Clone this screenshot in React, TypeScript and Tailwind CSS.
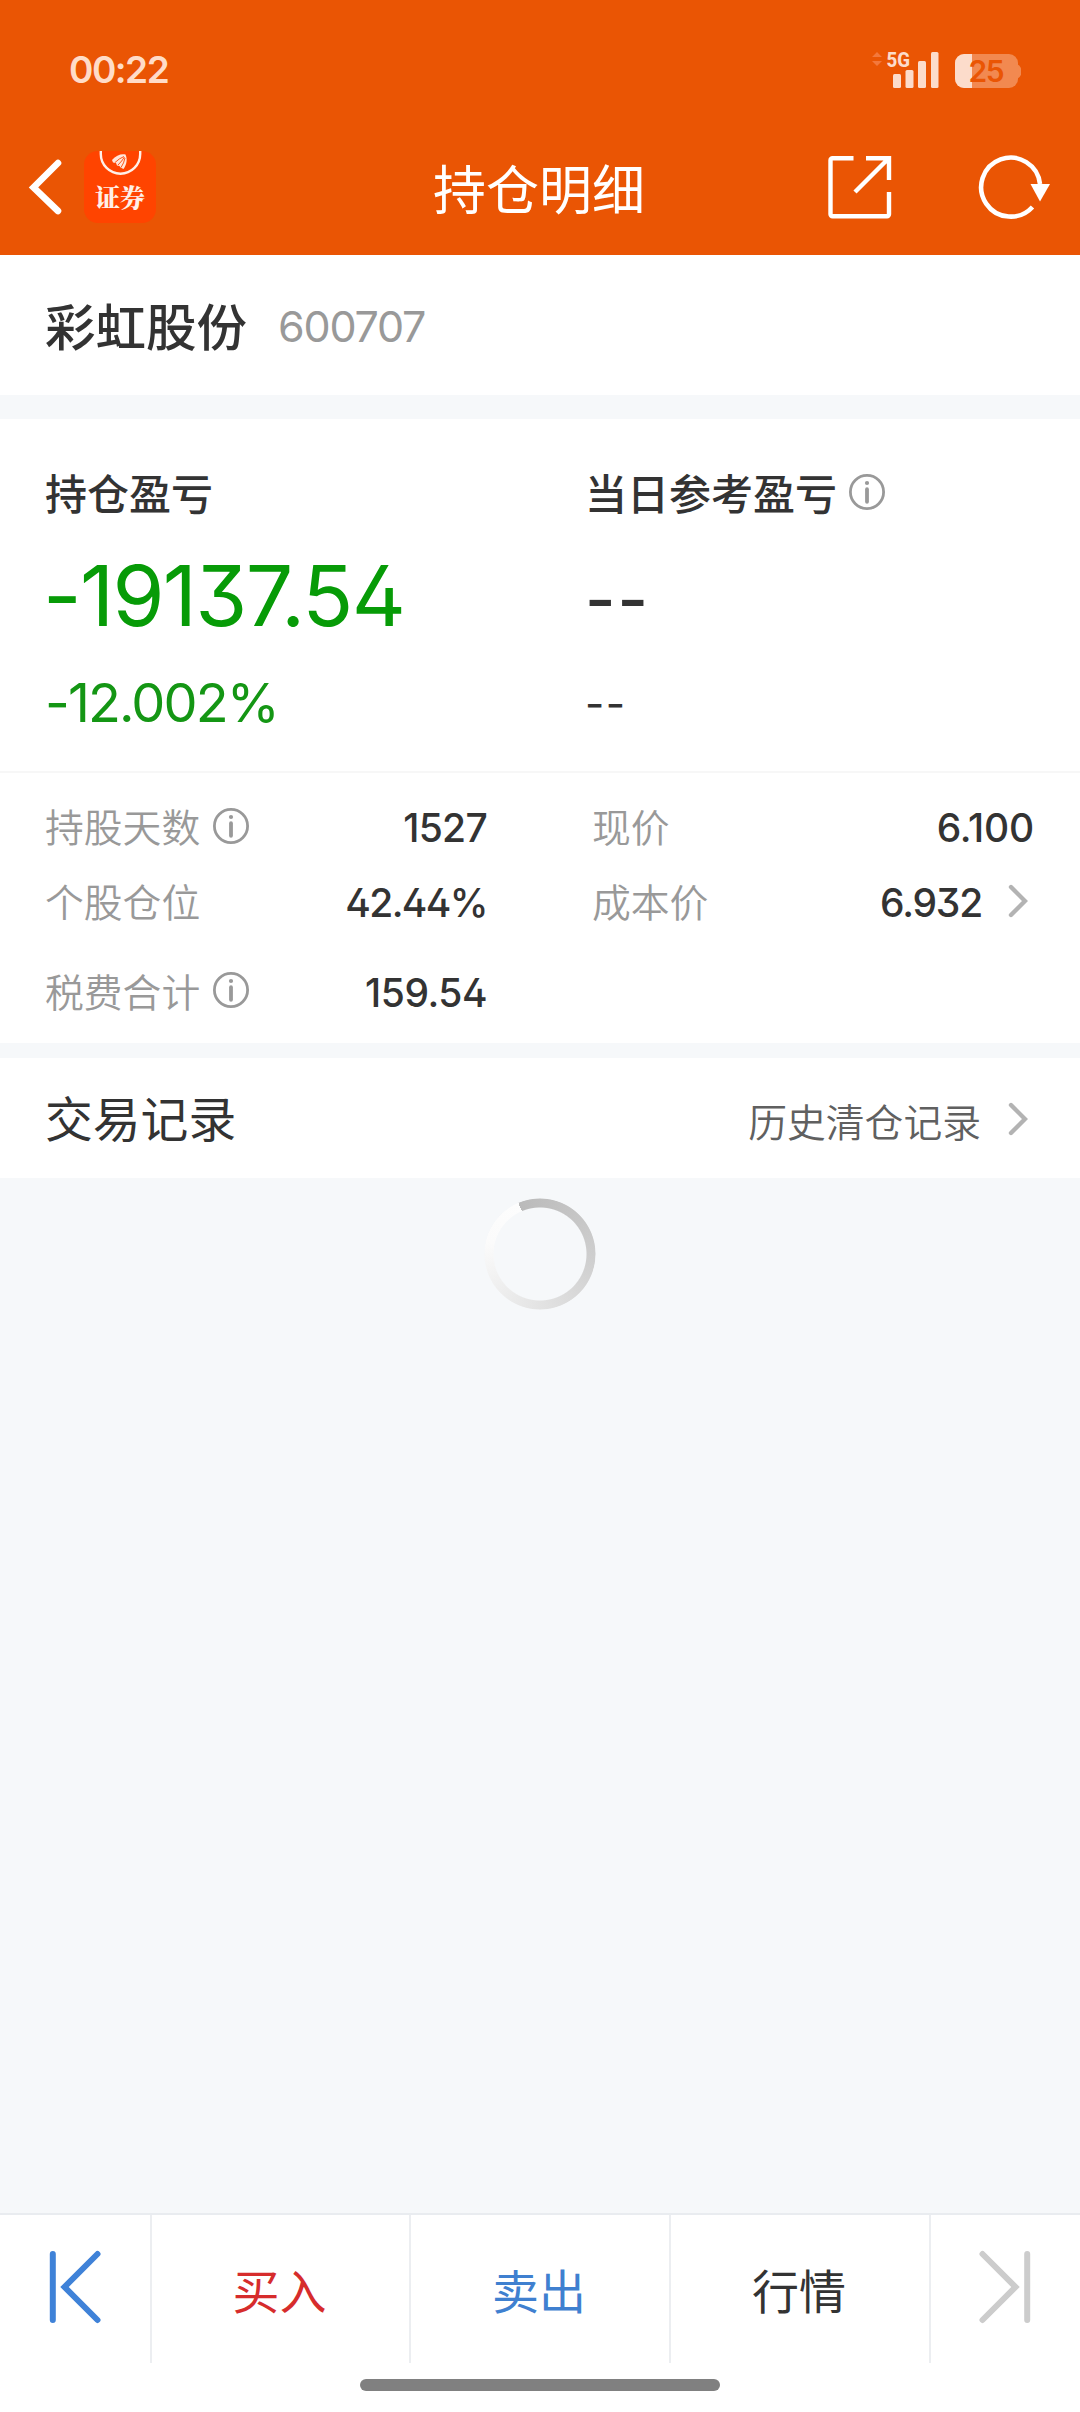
import type { ReactNode } from 'react'

const numFont = "font-['Inter','Noto_Sans_CJK_SC',sans-serif] [font-feature-settings:'cv02','cv09']"

function InfoIcon() {
  return (
    <svg width="36" height="36" viewBox="0 0 36 36" fill="none" stroke="#999" className="block shrink-0">
      <circle cx="18" cy="18" r="16.6" strokeWidth="2.8" />
      <circle cx="18" cy="9" r="2.1" fill="#999" stroke="none" />
      <path d="M18 15.2v12.6" strokeWidth="3.8" strokeLinecap="round" />
    </svg>
  )
}

function ChevronRight() {
  return (
    <svg width="20" height="34" viewBox="0 0 20 34" fill="none" className="block shrink-0">
      <path d="M3 3l14 14L3 31" stroke="#b3b3b3" strokeWidth="4.4" strokeLinecap="round" />
    </svg>
  )
}

function StatusBar() {
  return (
    <div className="flex h-[116px] items-start justify-between pl-[69px] pr-[59px]">
      <span className={`${numFont} mt-[47px] text-[37px] leading-[46px] font-semibold tracking-[-1.5px] text-[#ffdcc8]`}>00:22</span>
      <div className="mt-[44px] flex">
        <svg width="72" height="46" viewBox="0 -6 72 46" className="block overflow-visible">
          <path d="M2 7l5-5 5 5zM2 11h10l-5 5z" fill="#f3783c" />
          <text x="16.5" y="17" fontFamily="Roboto, sans-serif" fontWeight="800" fontSize="21" textLength="23.5" lengthAdjust="spacingAndGlyphs" fill="#fcdccb">5G</text>
          <g fill="#fcdccb">
            <rect x="23" y="24" width="8" height="14" rx="1.5" />
            <rect x="35.5" y="20" width="8" height="18" rx="1.5" />
            <rect x="48" y="11" width="8" height="27" rx="1.5" />
            <rect x="61" y="2" width="7.5" height="36" rx="1.5" />
          </g>
        </svg>
        <svg width="68" height="46" viewBox="0 -6 68 46" className="ml-[11px] block">
          <clipPath id="level"><rect x="0" y="0" width="19" height="40" /></clipPath>
          <path d="M64 14q4.500 2 4.500 7.500T64 29z" fill="#f28950" />
          <rect x="2" y="4" width="63" height="34" rx="9" fill="#f28950" />
          <rect x="2" y="4" width="63" height="34" rx="9" fill="#fcdccb" clipPath="url(#level)" />
          <text x="15.5" y="32" fontFamily="Inter, sans-serif" fontWeight="600" fontSize="30" textLength="36" fill="#ea5504">25</text>
        </svg>
      </div>
    </div>
  )
}

function AppLogo() {
  return (
    <svg width="72" height="72" viewBox="0 0 72 72" className="block">
      <rect width="72" height="72" rx="14" fill="#ff4400" />
      <path d="M16.800 0v3a19.700 19.700 0 0 0 39.400 0V0" fill="none" stroke="#fff0e8" strokeWidth="2.4" />
      <path d="M28 9c4-4.500 9-6.500 13.500-5.500 2 4.500 1.500 9.500-2 14.500l-3-1.500-1-1.500-2.500-.5-1-2.500-3-.5z" fill="#ffe6da" />
      <path d="M31 11.500q4-4 9-6M34 14q4-4 6.500-8M37 16.500q3-4.500 4-9.500" stroke="#ff4400" strokeWidth=".9" fill="none" />
      <text x="11" y="56" fontFamily="'Noto Serif CJK SC', 'Noto Sans CJK SC', sans-serif" fontWeight="800" fontSize="25" textLength="50" fill="#fff0e8">证券</text>
    </svg>
  )
}

function TitleBar() {
  return (
    <div className="grid h-[139px] grid-cols-3 items-start">
      <div className="flex pl-[28px] pt-[35px]">
        <svg width="36" height="72" viewBox="0 0 36 72" fill="none" className="block">
          <path d="M30 12L5.500 36.500 30 60" stroke="#fff" strokeWidth="6.6" strokeLinecap="round" />
        </svg>
        <div className="ml-[20px]"><AppLogo /></div>
      </div>
      <h1 className="pt-[33px] pr-[2px] text-center text-[53px] leading-[76px] text-white">持仓明细</h1>
      <div className="flex justify-end pr-[29px] pt-[38px]">
        <svg width="66" height="66" viewBox="0 0 66 66" fill="none" stroke="#fff" strokeWidth="4.4" className="block">
          <path d="M27.500 4.200H6.500a2 2 0 0 0-2 2v54a2 2 0 0 0 2 2h54.500a2 2 0 0 0 2-2V38" />
          <path d="M40 4.200h23V26M62 5L29 38" />
        </svg>
        <svg width="76" height="66" viewBox="0 0 76 66" fill="none" className="ml-[83px] block">
          <path d="M57.500 53A29.500 29.500 0 1 1 65 30" stroke="#fff" strokeWidth="4.6" />
          <path d="M55.500 30h19.500L65 47.500z" fill="#fff" />
        </svg>
      </div>
    </div>
  )
}

function Stat({ label, value, info, chevron, className }: {
  label: string; value: string; info?: boolean; chevron?: boolean; className: string
}) {
  return (
    <div className={`flex items-center justify-between ${className}`}>
      <span className="flex items-center gap-[13px] pb-[6px] text-[38.8px] [font-weight:350] tracking-normal text-[#999]">
        {label}
        {info && <span><InfoIcon /></span>}
      </span>
      <span className="flex items-center text-[#333]">
        <span className={`${numFont} text-[39px] font-medium`}>{value}</span>
        {chevron && <span className="-mt-[5px] ml-[26px] mr-[6px]"><ChevronRight /></span>}
      </span>
    </div>
  )
}

function Tab({ children, className = '' }: { children: ReactNode; className?: string }) {
  return (
    <button className={`flex items-center justify-center border-l-2 border-[#eceef1] pr-[2px] text-[47px] ${className}`}>
      {children}
    </button>
  )
}

export default function App() {
  return (
    <div className="flex h-[2412px] w-[1080px] flex-col overflow-hidden bg-[#f6f8fa] font-['Noto_Sans_CJK_SC',sans-serif] text-[#333]">
      <header className="h-[255px] shrink-0 bg-[#ea5504]">
        <StatusBar />
        <TitleBar />
      </header>

      <section className="flex h-[140px] shrink-0 items-center bg-white pl-[45px]">
        <h2 className="pb-[3px] text-[50.5px] leading-[70px] font-medium">彩虹股份</h2>
        <span className={`${numFont} ml-[31px] pt-[1px] text-[43px] leading-[70px] tracking-[-1.2px] text-[#999]`}>600707</span>
      </section>

      <section className="mt-[24px] h-[624px] shrink-0 bg-white">
        <div className="grid h-[354px] grid-cols-[540px_1fr] border-b-2 border-[#f7f7f7] pl-[45px] pt-[43px]">
          <div>
            <div className="text-[42px] leading-[60px] font-medium">持仓盈亏</div>
            <div className={`${numFont} -ml-[2px] mt-[24px] text-[84px] leading-[100px] tracking-[-1.7px] text-[#079b07]`}>-19137.54</div>
            <div className={`${numFont} mt-[25px] text-[54px] leading-[64px] tracking-[-1.9px] text-[#149614]`}>-12.002%</div>
          </div>
          <div>
            <div className="flex items-center gap-[12px] text-[42px] leading-[60px] font-medium">
              当日参考盈亏
              <span className="-mt-[1px]"><InfoIcon /></span>
            </div>
            <div className={`${numFont} mt-[27px] text-[66px] leading-[100px] font-medium tracking-[2px]`}>--</div>
            <div className={`${numFont} mt-[23px] text-[42px] leading-[64px] tracking-[1.5px]`}>--</div>
          </div>
        </div>
        <div className="grid grid-cols-[442px_442px] gap-x-[105px] pl-[45px] pt-[18px]">
          <Stat className="h-[75px] tracking-[-0.7px]" label="持股天数" value="1527" info />
          <Stat className="h-[75px] tracking-[-0.2px]" label="现价" value="6.100" />
          <Stat className="h-[75px] tracking-[-1.6px]" label="个股仓位" value="42.44%" />
          <Stat className="h-[75px] tracking-[-1.2px]" label="成本价" value="6.932" chevron />
          <Stat className="h-[104px] tracking-[-0.5px]" label="税费合计" value="159.54" info />
        </div>
      </section>

      <section className="mt-[15px] flex h-[120px] shrink-0 items-center justify-between bg-white pl-[45px] pr-[52px]">
        <h3 className="pb-[2px] text-[47.8px]">交易记录</h3>
        <span className="flex items-center pt-[4px] text-[38.8px] [font-weight:350] text-[#606060]">
          历史清仓记录
          <span className="-mt-[2px] ml-[27px]"><ChevronRight /></span>
        </span>
      </section>

      <main className="flex flex-1 justify-center pt-[20px]">
        <div className="h-[112px] w-[112px] rounded-full bg-[conic-gradient(from_-23deg,#bababa,#d0d0d0_35%,#e6e6e6_60%,#fbfbfb_85%,#fdfdfd)] [mask:radial-gradient(closest-side,transparent_46px,#000_47px,#000_55px,transparent_56px)]" />
      </main>

      <nav className="grid h-[150px] shrink-0 grid-cols-[150px_259px_260px_260px_151px] border-t-2 border-[#e9ecf0] bg-white">
        <button className="flex justify-center">
          <svg width="60" height="80" viewBox="0 0 60 80" fill="none" stroke="#3f82d8" strokeWidth="6" strokeLinecap="round" className="mt-[32px] block">
            <path d="M7.800 7v66M52.500 7L19.500 40l33 33" />
          </svg>
        </button>
        <Tab className="text-[#d62c2c]">买入</Tab>
        <Tab className="text-[#3f80d0]">卖出</Tab>
        <Tab>行情</Tab>
        <button className="flex justify-center border-l-2 border-[#eceef1] pr-[2px]">
          <svg width="60" height="80" viewBox="0 0 60 80" fill="none" stroke="#ccc" strokeWidth="6" strokeLinecap="round" className="mt-[32px] block">
            <path d="M52.200 7v66M7.500 7l33 33-33 33" />
          </svg>
        </button>
      </nav>
      <footer className="flex h-[49px] shrink-0 justify-center bg-white pt-[16px]">
        <div className="h-[12px] w-[360px] rounded-full bg-[#808080]" />
      </footer>
    </div>
  )
}
